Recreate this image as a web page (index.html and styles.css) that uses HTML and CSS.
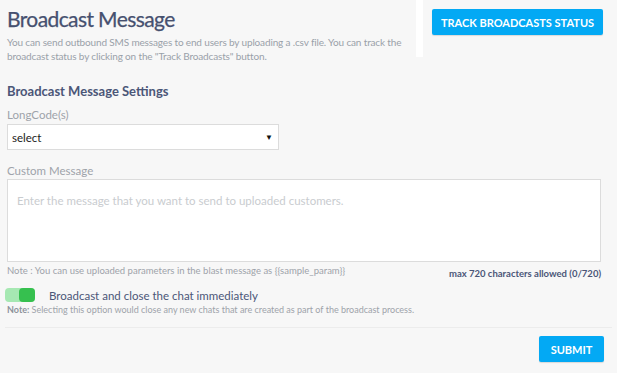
FILE: index.html
```html
<!DOCTYPE html>
<html>
<head>
<meta charset="utf-8">
<link rel="stylesheet" href="styles.css">
</head>
<body>
<div class="page">
  <header class="top">
    <div class="intro">
      <h1 class="title">Broadcast Message</h1>
      <p class="desc">You can send outbound SMS messages to end users by uploading a .csv file. You can track the broadcast status by clicking on the "Track Broadcasts" button.</p>
    </div>
    <div class="divider"></div>
    <div class="actions">
      <button class="btn btn-track">TRACK BROADCASTS STATUS</button>
    </div>
  </header>

  <section class="settings">
    <h2 class="section-title">Broadcast Message Settings</h2>
    <label class="field-label">LongCode(s)</label>
    <div class="select">
      <span class="select-value">select</span>
      <span class="select-arrow">▼</span>
    </div>

    <label class="field-label msg-label">Custom Message</label>
    <div class="textarea"><span class="placeholder">Enter the message that you want to send to uploaded customers.</span></div>
    <div class="msg-foot">
      <span class="hint">Note : You can use uploaded parameters in the blast message as {{sample_param}}</span>
      <span class="count">max 720 characters allowed (0/720)</span>
    </div>

    <div class="toggle-row">
      <span class="toggle"><span class="knob"></span></span>
      <span class="toggle-label">Broadcast and close the chat immediately</span>
    </div>
    <p class="note"><b>Note:</b> Selecting this option would close any new chats that are created as part of the broadcast process.</p>
  </section>

  <footer class="foot">
    <button class="btn btn-submit">SUBMIT</button>
  </footer>
</div>
</body>
</html>
```
FILE: styles.css
```css
* { box-sizing: border-box; }
html, body { margin: 0; padding: 0; }
body {
  background: #f7f7f7;
  font-family: "Lato", "Open Sans", sans-serif;
  color: #4a5574;
  width: 617px;
  height: 373px;
  overflow: hidden;
}
.top {
  display: flex;
  align-items: flex-start;
}
.intro {
  width: 416px;
  padding: 6px 0 0 7px;
}
.title {
  margin: 0;
  font-size: 21px;
  font-weight: 400;
  color: #46506f;
  line-height: 26px;
  letter-spacing: -0.6px;
  -webkit-text-stroke: 0.25px #46506f;
}
.desc {
  margin: 3px 0 0 0;
  font-size: 10px;
  line-height: 14px;
  color: #9aa1a9;
  letter-spacing: -0.15px;
}
.divider {
  width: 7px;
  height: 57px;
  background: #ffffff;
}
.actions {
  padding: 9px 0 0 9px;
}
.btn {
  border: 0;
  background: #03a9f4;
  color: #fff;
  font-family: inherit;
  font-weight: 700;
  font-size: 11px;
  border-radius: 2px;
  cursor: pointer;
  box-shadow: 0 1px 1px rgba(0,0,0,0.12);
}
.btn-track {
  width: 171px;
  height: 26px;
  padding: 0;
}
.settings {
  padding: 20px 16px 0 7px;
}
.section-title {
  margin: 0;
  font-size: 13px;
  font-weight: 700;
  color: #4b5677;
  line-height: 16px;
}
.field-label {
  display: block;
  margin-top: 9px;
  font-size: 11.5px;
  color: #9ea3aa;
  line-height: 14px;
}
.select {
  margin-top: 2px;
  width: 272px;
  height: 26px;
  background: #fff;
  border: 1px solid #dcdcdc;
  display: flex;
  align-items: center;
  justify-content: space-between;
  padding: 0 5px 0 4px;
}
.select-value {
  font-size: 11.5px;
  color: #222;
}
.select-arrow {
  font-size: 8px;
  color: #111;
}
.msg-label { margin-top: 14px; }
.textarea {
  margin-top: 1px;
  width: 594px;
  height: 83px;
  background: #fff;
  border: 1px solid #dcdcdc;
  padding: 9px 0 0 9px;
}
.placeholder {
  font-size: 11.5px;
  color: #c9cccf;
}
.msg-foot {
  display: flex;
  justify-content: space-between;
  align-items: flex-end;
  width: 594px;
  margin-top: 3px;
}
.hint {
  font-size: 9.5px;
  color: #9ea3aa;
}
.count {
  font-size: 9.5px;
  font-weight: 700;
  color: #4b5677;
  margin-bottom: -3px;
}
.toggle-row {
  display: flex;
  align-items: center;
  margin-top: 12px;
  margin-left: -2px;
}
.toggle {
  width: 30px;
  height: 14px;
  border-radius: 4px;
  background: #a6e8b2;
  display: flex;
  justify-content: flex-end;
}
.knob {
  width: 16px;
  height: 14px;
  border-radius: 4px;
  background: #36c04f;
}
.toggle-label {
  margin-left: 14px;
  font-size: 11.5px;
  color: #4b5677;
}
.note {
  margin: 2px 0 0 0;
  font-size: 9px;
  color: #9ea3aa;
}
.note b { color: #8d939b; }
.foot {
  margin: 12px 5px 0 5px;
  border-top: 1px solid #ececec;
  display: flex;
  justify-content: flex-end;
  padding: 8px 8px 0 0;
}
.btn-submit {
  width: 65px;
  height: 26px;
  font-size: 11px;
}
```
